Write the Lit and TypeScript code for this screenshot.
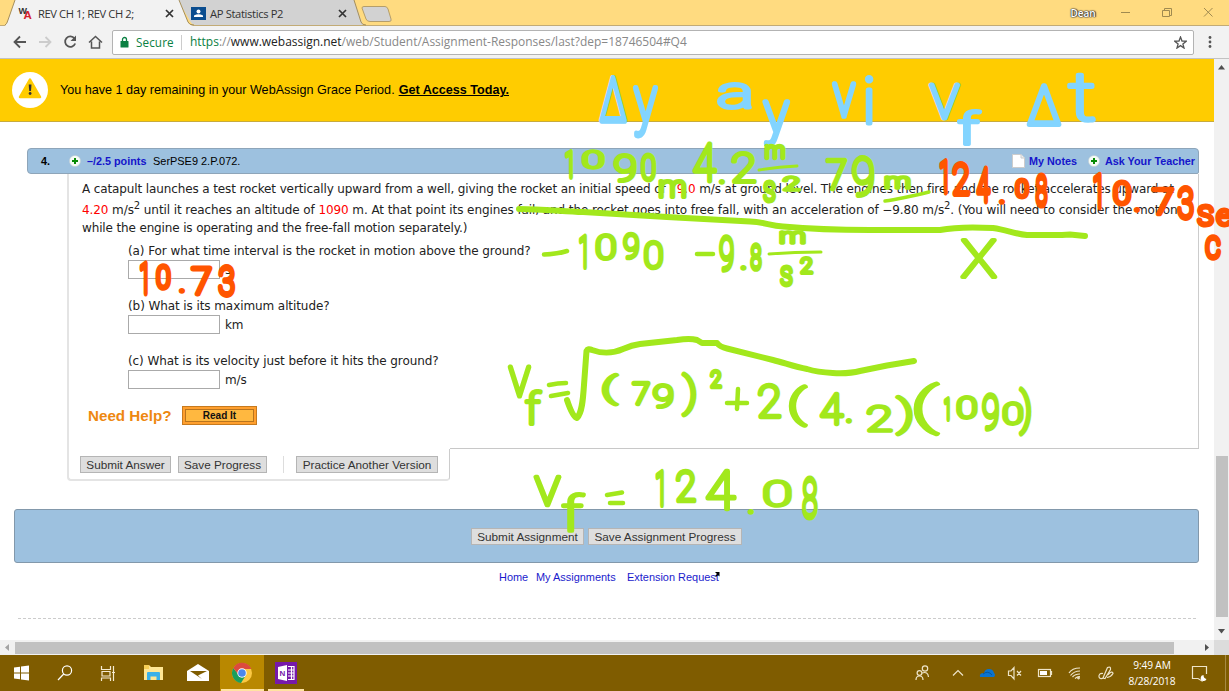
import { LitElement, html, css, svg } from "lit";
import { customElement } from "lit/decorators.js";

type Mark = [string, number, number, number, number];
const SKY = "#82d4ff";
const LIME = "#a2e81c";
const FLAME = "#ff5500";

// Each mark: character, left, top, right, bottom of the inked area.
const sky: Mark[] = [
  ["Δ", 598, 75, 628, 123], ["y", 632, 85, 659, 139], ["a", 717, 81, 752, 111], ["y", 762, 98, 791, 147],
  ["v", 831, 81, 857, 119], ["i", 865, 74, 874, 126], ["V", 928, 82, 961, 121], ["f", 957, 108, 982, 147],
  ["Δ", 1026, 83, 1062, 127], ["t", 1067, 73, 1096, 124],
];
const lime: Mark[] = [
  ["1", 564, 150, 574, 180], ["0", 582, 148, 605, 171], ["9", 613, 151, 637, 184], ["0", 640, 152, 657, 183],
  ["m", 658, 179, 687, 200], ["4", 692, 142, 718, 184], [".", 719, 179, 725, 185], ["2", 731, 151, 757, 185],
  ["m", 764, 144, 786, 161], ["s", 762, 180, 777, 204], ["2", 782, 175, 801, 193],
  ["7", 825, 157, 848, 192], ["9", 851, 155, 875, 198], ["m", 884, 175, 911, 191],
  ["1", 578, 234, 588, 270], ["0", 595, 233, 617, 262], ["9", 622, 231, 640, 261], ["0", 643, 238, 664, 271],
  ["9", 718, 234, 735, 273], [".", 741, 265, 746, 271], ["8", 749, 243, 763, 272],
  ["m", 779, 230, 806, 246], ["s", 779, 265, 794, 288], ["2", 799, 256, 814, 276], ["X", 960, 238, 998, 280],
  ["v", 507, 364, 532, 399], ["f", 524, 389, 543, 427],
  ["(", 602, 372, 619, 407], ["7", 631, 380, 651, 407], ["9", 652, 382, 674, 410], [")", 681, 370, 697, 418],
  ["2", 709, 369, 723, 390], ["2", 757, 383, 782, 420], ["(", 789, 383, 808, 429], ["4", 819, 391, 845, 427],
  [".", 846, 418, 852, 424], ["2", 866, 403, 893, 434], [")", 895, 393, 913, 437], ["(", 914, 381, 940, 437],
  ["1", 943, 397, 951, 422], ["0", 956, 394, 978, 421], ["9", 981, 392, 1000, 432], ["0", 1002, 400, 1024, 427],
  [")", 1018, 386, 1032, 437],
  ["v", 533, 474, 562, 508], ["f", 561, 492, 586, 534], ["1", 655, 470, 665, 508], ["2", 675, 468, 697, 504],
  ["4", 705, 469, 737, 512], [".", 748, 509, 754, 515], ["0", 763, 478, 792, 509], ["8", 801, 475, 819, 520],
];
const flame: Mark[] = [
  ["1", 941, 159, 949, 195], ["2", 951, 160, 971, 197], ["4", 975, 167, 992, 204], [".", 999, 199, 1005, 205],
  ["0", 1014, 176, 1030, 200], ["8", 1034, 172, 1049, 208], ["1", 1092, 172, 1103, 210], ["0", 1112, 178, 1132, 207],
  [".", 1134, 207, 1140, 213], ["7", 1151, 186, 1175, 217], ["3", 1176, 184, 1195, 221], ["s", 1196, 203, 1215, 228],
  ["e", 1215, 207, 1233, 228], ["c", 1204, 234, 1222, 261],
  ["1", 140, 261, 149, 296], ["0", 155, 262, 172, 291], [".", 179, 288, 185, 294], ["7", 190, 265, 213, 297], ["3", 217, 263, 236, 298],
];

@customElement("ink-layer")
class InkLayer extends LitElement {
  static styles = css`
    :host { position: absolute; inset: 0; pointer-events: none; overflow: hidden; }
    svg { display: block; }
    .hand { font-family: Roboto, sans-serif; font-weight: 100; }
    .dot { font-family: Roboto, sans-serif; font-weight: 900; }
  `;

  private ctx = document.createElement("canvas").getContext("2d")!;

  private mark([ch, x0, y0, x1, y1]: Mark, color: string, pen: number) {
    const dot = ch === ".";
    this.ctx.font = `${dot ? 900 : 100} 200px Roboto, sans-serif`;
    const m = this.ctx.measureText(ch);
    const l = -m.actualBoundingBoxLeft / 200, r = m.actualBoundingBoxRight / 200;
    const a = m.actualBoundingBoxAscent / 200, d = m.actualBoundingBoxDescent / 200;
    if (dot) {
      const size = 4.5 / (a + d);
      const x = (x0 + x1) / 2 - ((l + r) / 2) * size;
      const y = (y0 + y1) / 2 + ((a - d) / 2) * size;
      return svg`<text class="dot" x=${x} y=${y} font-size=${size} fill=${color} stroke=${color} stroke-width="1.5">${ch}</text>`;
    }
    const w = Math.max(x1 - x0 - pen, 1), h = Math.max(y1 - y0 - pen, 1);
    const size = h / (a + d);
    const fit = w / ((r - l) * size);
    // Narrow strokes keep a readable width and hang from the right edge.
    const sx = ch === "1" ? Math.max(fit, 0.5) : ch === "i" ? 1 : fit;
    const tx = x1 - pen / 2 - r * size * sx;
    const ty = y0 + pen / 2 + a * size;
    return svg`<text class="hand" transform=${`translate(${tx} ${ty}) scale(${sx} 1)`} font-size=${size}
      fill=${color} stroke=${color} stroke-width=${(pen - 0.8) / Math.sqrt(sx)}>${ch}</text>`;
  }

  render() {
    return html`<svg width="1229" height="691" viewBox="0 0 1229 691" stroke-linecap="round" stroke-linejoin="round">
      ${sky.map((m) => this.mark(m, SKY, 5.8))}
      ${lime.map((m) => this.mark(m, LIME, 5.2))}
      ${flame.map((m) => this.mark(m, FLAME, 5.8))}
      <g fill="none" stroke=${LIME} stroke-width="6">
        <path d="M519 209C540 209 560 211 583 212L667 217L750 221.5C765 222 770 226 783 226.5C810 229 840 230 870 230H940C955 227 975 227 993 228C1007 230 1015 234 1027 235H1062L1070 234.5L1085 236" />
        <path d="M567 400C569 406 573 417 577 418C582 413 583 400 584 385C585 370 586 358 586.5 351Q588 348 592 350C600 353 612 354 623 349Q632 345 640 344L677 340Q690 338 697 340L702 343L717 343Q720 347 727 348.5L773 360C785 363 795 367 807 369C820 373 845 375 860 371L887 365.5L914 361" />
      </g>
      <g fill="none" stroke=${LIME} stroke-width="4.5">
        <path d="M544 254.500Q558 254 567 251M697 254H713M549 385Q558 383 566 383M551 396L568 393M727 403H747M738 389L737 409M607 495L622 492.500M610 503H623" />
        <path stroke-width="3" d="M759 170Q778 167 797 166M769 254Q795 252 821 252" /><path stroke-width="3.500" d="M885 201Q900 199 929 192" />
      </g>
    </svg>`;
  }
}

@customElement("app-root")
class AppRoot extends LitElement {
  static styles = css`
    :host { display: block; position: relative; width: 1229px; height: 691px; overflow: hidden; background: #fff; font-family: "Liberation Sans", sans-serif; color: #000; }
    * { box-sizing: border-box; }
    .shell { display: flex; flex-direction: column; height: 691px; }
    svg { display: block; flex: none; }
    .strip { height: 26px; background: #ffdb80; border-bottom: 1px solid #c2ab76; display: grid; grid-template: 26px / 1229px; }
    .strip > * { grid-area: 1 / 1; }
    .ui { font-family: "Open Sans", sans-serif; font-size: 11.2px; white-space: nowrap; }
    .tabs { display: flex; align-items: center; height: 26px; color: #333; }
    .wa { margin-left: 18px; }
    .t1 { width: 127px; margin-left: 5px; letter-spacing: -.4px; }
    .person { margin-left: 17px; }
    .t2 { width: 128px; margin-left: 4px; letter-spacing: -.35px; }
    .dean { margin-left: 723px; width: 26px; text-align: center; color: #fff; font-size: 10px; font-weight: 600; text-shadow: 0 0 1px #333, 0 0 1px #333, 0 0 2px #333, 1px 0 1px #555; }
    .tabs .wc { margin-left: 24px; }
    .bar { height: 33px; background: #f2f2f2; border-bottom: 1px solid #c2c2c2; display: flex; align-items: center; padding-left: 11px; }
    .dots { margin-left: 13px; }
    .url { margin-left: 7px; width: 1082px; height: 25px; background: #fff; border: 1px solid #b3b3b3; border-radius: 2px; display: flex; align-items: center; padding: 0 6px 0 7px; color: #888; }
    .sec { color: #0b8043; margin-left: 7px; width: 45px; font-size: 11.7px; letter-spacing: .1px; }
    .addr { border-left: 1px solid #ccc; padding-left: 8px; height: 15px; line-height: 14px; font-size: 11.97px; flex: 1; }
    .addr b { font-weight: 400; color: #222; } .addr i { font-style: normal; color: #0b8043; }
    .view { height: 581px; display: flex; }
    .page { width: 1214px; height: 581px; overflow: hidden; }
    .vs { width: 15px; background: #f1f1f1; display: flex; flex-direction: column; align-items: center; padding-top: 6px; }
    .vthumb { width: 12px; height: 161px; background: #c1c1c1; margin-top: 386px; }
    .vs svg:last-child { margin-top: 12px; }
    .hs { height: 15px; background: #f1f1f1; display: flex; align-items: center; }
    .larr { margin-left: 5px; }
    .hthumb { width: 1159px; height: 12px; background: #c1c1c1; margin-left: 6px; margin-right: 31px; }
    .corner { margin-left: 5px; width: 15px; height: 15px; background: #dcdcdc; }
    .banner { height: 63px; background: #fc0; border-bottom: 1px solid #c8ab3c; display: flex; align-items: center; font-size: 12.6px; padding-left: 12px; white-space: nowrap; }
    .banner span { margin-left: 12px; } .banner b { text-decoration: underline; font-size: 12.6px; margin-left: 4px; }
    .qhead { margin: 26px 0 0 27px; width: 1172px; height: 26px; background: #9dc1df; border: 1px solid #8ea5b9; border-radius: 4px 4px 2px 4px; display: flex; align-items: center; font-size: 10.95px; white-space: nowrap; padding-left: 13px; }
    .qhead b { color: #1515cb; font-size: 10.8px; } .qhead b.num { color: #000; width: 28px; }
    .qhead .pts { margin-left: 6px; width: 66px; }
    .qhead .src { flex: 1; }
    .qhead .mn { margin-left: 4px; width: 59px; } .qhead .ask { margin-left: 5px; width: 93px; }
    .body { margin-left: 67px; width: 1132px; height: 275px; border-left: 2px solid #e4e4e4; border-right: 1px solid #ccc; display: flex; flex-direction: column; font: 12px "DejaVu Sans", sans-serif; }
    .ln { height: 20px; line-height: 20px; white-space: nowrap; margin-left: 13px; color: #222; }
    .l1 { margin-top: 5px; letter-spacing: -.12px; } .l2 { margin-top: 1px; letter-spacing: -.086px; } .l3 { height: 17px; line-height: 17px; letter-spacing: -.14px; }
    .ln em { font-style: normal; color: #f00; }
    sup { font-size: 10px; line-height: 0; vertical-align: 5px; }
    .part { margin-left: 59px; height: 55px; color: #222; white-space: nowrap; letter-spacing: -.086px; }
    .part.a { margin-top: 6px; }
    .part p { margin: 0; height: 17px; line-height: 17px; }
    .ans { display: flex; align-items: center; height: 19px; }
    .box { width: 92px; height: 19px; border: 1px solid #aaa; background: #fff; margin-right: 5px; }
    .help { margin: -3px 0 0 19px; display: flex; align-items: center; height: 20px; color: #ee8811; font: bold 15.2px "Liberation Sans"; }
    .help span { width: 94px; }
    .read { width: 75px; height: 19px; border: 1px solid #c77a1e; background: #ff9f2e; padding: 2px; }
    .read div { border: 1px solid #b9741d; background: #ffb840; height: 13px; line-height: 12px; text-align: center; font-size: 10px; color: #111; }
    .foot { display: flex; height: 32px; margin-left: 67px; width: 1132px; }
    .ftab { width: 383px; border: 2px solid #e4e4e4; border-right: 1px solid #ccc; border-top: 0; border-radius: 0 0 4px 4px; display: flex; align-items: center; padding-left: 11px; }
    .rest { flex: 1; height: 1px; background: #c8c8c8; margin-top: -1px; }
    .btn { height: 17px; border: 1px solid #b5b5b5; background: #dedede; color: #333; font-size: 11.75px; line-height: 15px; text-align: center; white-space: nowrap; }
    .sa { width: 91px; } .sp { width: 89px; margin-left: 7px; } .pv { width: 142px; margin-left: 12px; } .sep { width: 1px; height: 17px; background: #ddd; margin-left: 16px; }
    .abar { margin: 28px 0 0 14px; width: 1185px; height: 54px; background: #9dc1df; border: 1px solid #8298ab; border-radius: 3px; display: flex; justify-content: center; align-items: center; gap: 4px; }
    .s1 { width: 113px; } .s2 { width: 154px; }
    .links { display: flex; height: 28px; align-items: center; margin-left: 499px; font-size: 11.95px; letter-spacing: 0; color: #1a1acc; white-space: nowrap; }
    .links .w { font-size: 10.95px; } .links .w1 { width: 37px; } .links .w2 { width: 91px; } .links .w3 { width: 88px; }
    .links svg { margin: -6px 0 0 0; }
    .dash { margin: 27px 0 0 18px; width: 1178px; border-top: 1px dashed #ccc; }
    .task { height: 36px; background: #7f5c00; display: grid; grid-template: 36px / 1229px; color: #fff; }
    .task > * { grid-area: 1 / 1; }
    .clock { margin-left: 1125px; width: 54px; text-align: center; font-size: 10.2px; line-height: 16px; padding-top: 2px; letter-spacing: -.15px; }
  `;

  private plus = html`<svg width="12" height="12"><circle cx="6" cy="6" r="5.6" fill="#f5fbf5" stroke="#bccbd4" stroke-width=".6" /><path d="M6 3v6M3 6h6" stroke="#078a07" stroke-width="2" /></svg>`;

  render() {
    return html`
      <div class="shell">
        <div class="strip">
          <svg width="1229" height="26">
            <path d="M178 0L190 21Q192 25 196 25H363L354 0Z" fill="#d2d2d2" />
            <path d="M354 0L361 22Q362 25 366 25" fill="none" stroke="#a58e5a" />
            <path d="M5 26Q7 24 8 20L15 0H179L188 22Q189 25 194 26Z" fill="#f2f2f2" />
            <path d="M5 25Q7 24 8 20L15 0M179 0L188 22Q189 25 194 25" fill="none" stroke="#a58e5a" />
            <path d="M362 8Q362 6.500 364 6.500H385Q387 6.500 388 9L391 19Q392 21.500 389 21.500H370Q367 21.500 366 19Z" fill="#d2d2d2" stroke="#b59e6a" />
          </svg>
          <div class="tabs ui">
            <svg class="wa" width="15" height="16" viewBox="0 0 15 16"><text x="0.500" y="9" font-family="Liberation Sans" font-weight="700" font-size="9" fill="#333">W</text><text x="5.500" y="14" font-family="Liberation Sans" font-weight="700" font-size="11.500" fill="#d3202c">A</text></svg>
            <span class="t1">REV CH 1; REV CH 2;</span>
            <svg width="9" height="9"><path d="M1 1L8 8M8 1L1 8" stroke="#333" stroke-width="1.700" /></svg>
            <svg class="person" width="15" height="13"><rect width="15" height="13" fill="#0a4d8f" /><circle cx="7.500" cy="4.500" r="2" fill="#fff" /><path d="M3 10V8.500Q7.500 6 12 8.500V10Z" fill="#fff" /></svg>
            <span class="t2">AP Statistics P2</span>
            <svg width="9" height="9"><path d="M1 1L8 8M8 1L1 8" stroke="#333" stroke-width="1.700" /></svg>
            <span class="dean">Dean</span>
            <svg class="wc" width="94" height="12"><path d="M1 5.500H10" stroke="#a08a50" /><path d="M42.500 3.500H49.500V9.500H42.500ZM44.500 3V1.500H51.500V8.500H50M84 1L92.500 9.500M92.500 1L84 9.500" fill="none" stroke="#a08a50" /></svg>
          </div>
        </div>
        <div class="bar ui">
          <svg width="94" height="18" fill="none" stroke="#555" stroke-width="1.800">
            <path d="M15 9H3.500M9 3.500L3.500 9L9 14.500" />
            <path stroke="#ccc" d="M28 9H39.500M34.500 4L39.500 9L34.500 14" />
            <path d="M63.500 5.500A5.200 5.200 0 1 0 64.200 10.500" /><path d="M65 2.500V8H59.500Z" fill="#555" stroke="none" />
            <path stroke-width="1.500" d="M78 9.500L84.500 3.500L91 9.500M80.500 8.500V15H88.500V8.500" />
          </svg>
          <div class="url">
            <svg width="9" height="12"><rect x=".5" y="5" width="8" height="6.500" rx=".6" fill="#0b8043" /><path d="M2.500 5V3.500a2 2 0 0 1 4 0V5" fill="none" stroke="#0b8043" stroke-width="1.300" /></svg>
            <span class="sec">Secure</span>
            <span class="addr"><i>https</i>://<b>www.webassign.net</b>/web/Student/Assignment-Responses/last?dep=18746504#Q4</span>
            <svg width="13" height="13" viewBox="0 0 13 13"><path d="M6.500 1L8 5L12.200 5.200L8.900 7.900L10 12L6.500 9.600L3 12L4.100 7.900L.8 5.200L5 5Z" fill="none" stroke="#555" stroke-width="1.300" /></svg>
          </div>
          <svg class="dots" width="6" height="14" fill="#555"><circle cx="3" cy="2.500" r="1.400" /><circle cx="3" cy="7" r="1.400" /><circle cx="3" cy="11.500" r="1.400" /></svg>
        </div>
        <div class="view">
          <div class="page">
            <div class="banner">
              <svg width="36" height="36"><circle cx="18" cy="18" r="18" fill="#fff" /><path d="M18 7.500L28 25H8Z" fill="#fc0" stroke="#fc0" stroke-width="2.500" stroke-linejoin="round" /><path d="M16.700 12.500H19.500L19 19H17.200Z" fill="#333" /><circle cx="18.100" cy="21.500" r="1.400" fill="#333" /></svg>
              <span>You have 1 day remaining in your WebAssign Grace Period.</span><b>Get Access Today.</b>
            </div>
            <div class="qhead">
              <b class="num">4.</b>${this.plus}<b class="pts">–/2.5 points</b><span class="src">SerPSE9 2.P.072.</span>
              <svg width="13" height="14"><path d="M.5 .5H9L12.500 4V13.500H.5Z" fill="#fff" stroke="#ccc" /><path d="M9 .5V4H12.500" fill="#eee" stroke="#ccc" /></svg><b class="mn">My Notes</b>${this.plus}<b class="ask">Ask Your Teacher</b>
            </div>
            <div class="body">
              <div class="ln l1">A catapult launches a test rocket vertically upward from a well, giving the rocket an initial speed of <em>79.0</em> m/s at ground level. The engines then fire, and the rocket accelerates upward at</div>
              <div class="ln l2"><em>4.20</em> m/s<sup>2</sup> until it reaches an altitude of <em>1090</em> m. At that point its engines fail, and the rocket goes into free fall, with an acceleration of −9.80 m/s<sup>2</sup>. (You will need to consider the motion</div>
              <div class="ln l3">while the engine is operating and the free-fall motion separately.)</div>
              <div class="part a"><p>(a) For what time interval is the rocket in motion above the ground?</p><div class="ans"><div class="box"></div>s</div></div>
              <div class="part"><p>(b) What is its maximum altitude?</p><div class="ans"><div class="box"></div>km</div></div>
              <div class="part"><p>(c) What is its velocity just before it hits the ground?</p><div class="ans"><div class="box"></div>m/s</div></div>
              <div class="help"><span>Need Help?</span><div class="read"><div>Read It</div></div></div>
            </div>
            <div class="foot">
              <div class="ftab"><div class="btn sa">Submit Answer</div><div class="btn sp">Save Progress</div><div class="sep"></div><div class="btn pv">Practice Another Version</div></div>
              <div class="rest"></div>
            </div>
            <div class="abar"><div class="btn s1">Submit Assignment</div><div class="btn s2">Save Assignment Progress</div></div>
            <div class="links"><span class="w w1">Home</span><span class="w w2">My Assignments</span><span class="w w3">Extension Request</span><svg width="5" height="5"><path d="M0 0H4.500V4.500L3 3L1 5L0 4L2 2Z" /></svg></div>
            <div class="dash"></div>
          </div>
          <div class="vs">
            <svg width="7" height="5"><path d="M0 4.500L3.500 0L7 4.500Z" fill="#505050" /></svg>
            <div class="vthumb"></div>
            <svg width="7" height="5"><path d="M0 0L3.500 4.500L7 0Z" fill="#505050" /></svg>
          </div>
        </div>
        <div class="hs">
          <svg class="larr" width="4" height="7"><path d="M4 0V7L0 3.500Z" fill="#a3a3a3" /></svg>
          <div class="hthumb"></div>
          <svg width="4" height="7"><path d="M0 0V7L4 3.500Z" fill="#505050" /></svg><div class="corner"></div>
        </div>
        <div class="task">
          <svg width="1229" height="36" fill="none">
            <rect x="220" width="44" height="36" fill="#b98800" /><rect x="221" y="34" width="43" height="2" fill="#ffe3a0" /><rect x="268" y="34" width="36" height="2" fill="#ffe3a0" />
            <path d="M14 12.500L20 11.700V17.500H14ZM21 11.500L29 10.500V17.500H21ZM14 18.500H20V24.300L14 23.500ZM21 18.500H29V25.500L21 24.500Z" fill="#fff" />
            <g stroke="#fff" stroke-width="1.200"><circle cx="67" cy="15.500" r="4.600" /><path d="M63.700 19L58 25" />
            <path stroke="#f5ead0" d="M101.500 11V14.500H110.500V11M102 16.500H110V21H102ZM101.500 26V23H110.500V26M113.500 11V26M112 17.500H115" /></g>
            <path d="M144 10H149L151 12H163V25H144Z" fill="#ffe694" /><path d="M144 10H149V14H144Z" fill="#f7cf55" /><path d="M147 25V18Q147 17 148 17H159Q160 17 160 18V25H156.500V21.500H150.500V25Z" fill="#3ab0e8" />
            <path d="M187 16L198 9L209 16V26H187Z" fill="#fff" /><path d="M190 16H207L198 20.500L202 24Z" fill="#7f5c00" />
            <circle cx="242" cy="18" r="10" fill="#fbc843" /><path d="M233.300 13A10 10 0 0 0 241 28L246 20L242 18L238 19Z" fill="#1a9e5c" /><path d="M233.300 13A10 10 0 0 1 251.300 14H242L238 19Z" fill="#dc4b3e" /><circle cx="242" cy="18" r="4.700" fill="#fff" /><circle cx="242" cy="18" r="3.800" fill="#4a87ee" />
            <rect x="275" y="7" width="22" height="22" fill="#7719aa" /><path d="M278 12L287 10V26L278 24Z" fill="#fff" /><text x="279.500" y="21" font-family="Liberation Sans" font-weight="700" font-size="8" fill="#7719aa">N</text><path d="M288 11.500H294V24.500H288M288 15H294M288 18H294M288 21H294M291.500 11V25" stroke="#fff" stroke-width="1.200" />
            <g stroke="#eee4c8" stroke-width="1.200">
              <circle cx="919.500" cy="18" r="2.400" /><path d="M916 25Q916 21 919.500 21Q923 21 923 25" /><circle cx="925" cy="13.500" r="2.700" /><path d="M922 18Q928 16 928.500 22" />
              <path d="M953 20.500L958 15.500L963 20.500" />
              <path d="M1008.500 16H1011L1014 12.500V24L1011 20.500H1008.500ZM1017 16L1021 20.500M1021 16L1017 20.500" />
              <rect x="1038.500" y="14.500" width="12" height="7" /><rect x="1040" y="16" width="7" height="4" fill="#fff" stroke="none" /><path d="M1051.500 16V20" />
              <path d="M1069 18Q1072 13 1080 13M1070.500 20.500Q1074 16 1080 16M1072.500 22Q1075 19 1080 19M1075 23.500Q1077 21.500 1080 21.500" /><circle cx="1078.500" cy="23" r=".8" />
              <path d="M1103 18.500Q1098.500 18 1099 22Q1100.500 25 1104 22.500M1103 23L1107.500 12.500Q1111 11 1110.500 14.500L1105 23.500ZM1108 20Q1112 15 1113 18.500Q1111 22 1107 22.500" />
              <path d="M1202 23.500L1202 26L1198 23.500H1192.500V11.500H1206.500V19" /><path d="M1203.500 20A3 3 0 1 0 1206.500 24Q1203.500 23.500 1203.500 20Z" fill="#fff" stroke="none" />
            </g>
            <path d="M980 22Q979 18 984 18Q985 14 989 14Q993 14 994 18Q996 20 994 22Z" fill="#0a73cf" /><path d="M983 19Q988 15 992 20" stroke="#054f92" stroke-width=".8" />
            <path d="M1225.500 0V36" stroke="#a58a45" />
          </svg>
          <div class="clock ui">9:49 AM<br />8/28/2018</div>
        </div>
      </div>
      <ink-layer></ink-layer>
    `;
  }
}
